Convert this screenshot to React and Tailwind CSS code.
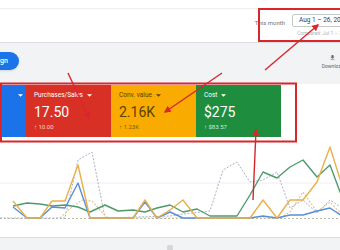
import React from 'react'

const toPts = (arr) => arr.map(([x, y]) => `${x},${y - 137}`).join(' ')

const series = {
  green: [[13,206],[27,203],[40,204],[52,206],[65,205],[78,207],[90,212],[105,205],[118,211],[133,210],[145,212],[157,208],[170,205],[183,212],[197,209],[210,216],[223,216],[237,216],[250,195],[263,172],[277,178],[290,167],[303,160],[317,177],[330,165],[345,205]],
  blue: [[13,207],[27,218],[40,218],[52,207],[65,208],[78,183],[90,218],[105,218],[118,218],[133,218],[145,202],[157,218],[170,212],[183,218],[197,218],[210,218],[223,218],[237,218],[250,218],[263,216],[277,218],[290,215],[303,215],[317,211],[330,208],[345,218]],
  yellow: [[13,201],[27,218],[40,218],[52,201],[65,201],[78,165],[90,218],[105,218],[118,218],[133,218],[145,200],[157,218],[170,210],[183,200],[197,218],[210,218],[223,218],[237,218],[250,218],[263,200],[277,218],[290,200],[303,200],[317,182],[330,147],[345,195]],
  gray: [[0,218],[65,218],[78,160],[92,152],[105,218],[170,216],[183,214],[210,211],[223,170],[237,162],[250,182],[263,180],[277,172],[290,208],[303,200],[317,213],[330,200],[345,210]],
  tan: [[60,218],[72,207],[82,200],[92,201],[102,212],[108,218],[280,218],[290,212],[303,192],[317,212],[330,202],[345,218]],
}

const Caret = ({ className }) => (
  <svg viewBox="0 0 6 3" className={className} fill="currentColor">
    <polygon points="0,0 6,0 3,3" />
  </svg>
)

const Card = ({ bg, fg, sub, label, value, delta }) => (
  <div className={`w-[85px] h-[52px] px-2 pt-[6px] ${bg} ${fg}`}>
    <div className="flex items-center gap-[4px] text-[6.5px] leading-[8px]">
      <span>{label}</span>
      <Caret className="w-[5px] h-[3px]" />
    </div>
    <div className="mt-[5px] text-[14px] leading-[16px]">{value}</div>
    <div className={`mt-[3px] text-[6px] leading-[7px] ${sub}`}>{delta}</div>
  </div>
)

export default function App() {
  return (
    <div className="relative w-[340px] h-[250px] overflow-hidden bg-white font-['Roboto',sans-serif]">
      {/* header */}
      <div className="h-[43px] pt-[8px] border-b border-[#dadce0]">
        <div className="h-full border-t border-[#eceef0] flex justify-end items-start pt-[5px]">
          <div className="flex items-center gap-[7px] pt-[4px]">
            <span className="text-[6px] text-[#70757a]">This month</span>
          </div>
          <div className="ml-[7px] w-[48px] shrink-0">
            <div className="h-[13px] w-[60px] border border-[#c4c7c9] rounded-[2px] flex items-center pl-[6px] text-[6.5px] text-[#3c4043] whitespace-nowrap">
              Aug 1 – 26, 2021
            </div>
            <div className="mt-[3px] pl-[5px] text-[5px] text-[#b0b4b8] whitespace-nowrap">Compared: Jul 1 – 26</div>
          </div>
        </div>
      </div>

      {/* toolbar band */}
      <div className="h-[41px] bg-[#f1f3f4] flex justify-between items-start">
        <button className="mt-[9px] -ml-[35px] h-[18px] pl-[11px] pr-[11px] rounded-full bg-[#1a73e8] text-white text-[7px] font-medium shadow-sm">
          Campaign
        </button>
        <div className="mt-[11px] mr-[-4px] flex flex-col items-center text-[#5f6368]">
          <svg viewBox="0 0 24 24" className="w-[7px] h-[7px]" fill="currentColor">
            <path d="M19 9h-4V3H9v6H5l7 7 7-7zM5 18v2h14v-2H5z" />
          </svg>
          <span className="mt-[2px] text-[5px] leading-[6px]">Download</span>
        </div>
      </div>

      {/* scorecards */}
      <div className="bg-white pt-[1px]">
        <div className="flex">
          <div className="w-[26px] h-[52px] bg-[#1a73e8] text-white flex justify-end pt-[9px] pr-[3px]">
            <Caret className="w-[5px] h-[3px]" />
          </div>
          <Card bg="bg-[#d93025]" fg="text-white" sub="text-[#f6d5d2]" label="Purchases/Sales" value="17.50" delta="↑ 10.00" />
          <Card bg="bg-[#f9ab00]" fg="text-[#5c4206]" sub="text-[#7a5a10]" label="Conv. value" value="2.16K" delta="↑ 1.23K" />
          <Card bg="bg-[#1e8e3e]" fg="text-white" sub="text-[#d4ead9]" label="Cost" value="$275" delta="↑ $83.57" />
        </div>

        {/* chart */}
        <svg viewBox="0 0 340 100" className="block w-[340px] h-[100px]">
          <line x1="0" y1="46" x2="340" y2="46" stroke="#eceef0" strokeWidth="1" />
          <line x1="0" y1="81.5" x2="340" y2="81.5" stroke="#b9b9a8" strokeWidth="1" strokeDasharray="2 2" />
          <polyline points={toPts(series.gray)} fill="none" stroke="#a8b3c4" strokeWidth="1" strokeDasharray="2 1.5" />
          <polyline points={toPts(series.tan)} fill="none" stroke="#e0c49a" strokeWidth="1.2" strokeDasharray="2 1.5" />
          <polyline points={toPts(series.green)} fill="none" stroke="#4f9a6b" strokeWidth="1.4" strokeLinejoin="round" />
          <polyline points={toPts(series.blue)} fill="none" stroke="#5a8ed8" strokeWidth="1.4" strokeLinejoin="round" />
          <polyline points={toPts(series.yellow)} fill="none" stroke="#eab04a" strokeWidth="1.4" strokeLinejoin="round" />
        </svg>
      </div>

      {/* footer */}
      <div className="border-t border-[#dadce0] bg-[#f1f3f4] h-[13px] flex justify-center">
        <div className="mt-[7px] w-[6px] h-[6px] rounded-[2px] bg-[#d5d8db]" />
      </div>

      {/* red annotations */}
      <svg className="absolute inset-0 w-[340px] h-[250px] pointer-events-none" viewBox="0 0 340 250">
        <defs>
          <marker id="ah" viewBox="0 0 10 10" refX="8" refY="5" markerWidth="7" markerHeight="7" markerUnits="userSpaceOnUse" orient="auto">
            <path d="M0,0 L10,5 L0,10 z" fill="#d9262b" />
          </marker>
        </defs>
        <rect x="259" y="9" width="90" height="32" fill="none" stroke="#d9262b" strokeWidth="2" />
        <rect x="1" y="83.5" width="295" height="58" fill="none" stroke="#d9262b" strokeWidth="2" />
        <line x1="68" y1="73" x2="89" y2="118" stroke="#d9262b" strokeWidth="1.4" markerEnd="url(#ah)" />
        <line x1="222" y1="73" x2="165" y2="112" stroke="#d9262b" strokeWidth="1.4" markerEnd="url(#ah)" />
        <line x1="265" y1="70" x2="318" y2="25" stroke="#d9262b" strokeWidth="1.4" markerEnd="url(#ah)" />
        <line x1="253" y1="200" x2="256" y2="130" stroke="#d9262b" strokeWidth="1.4" markerEnd="url(#ah)" />
      </svg>
    </div>
  )
}
